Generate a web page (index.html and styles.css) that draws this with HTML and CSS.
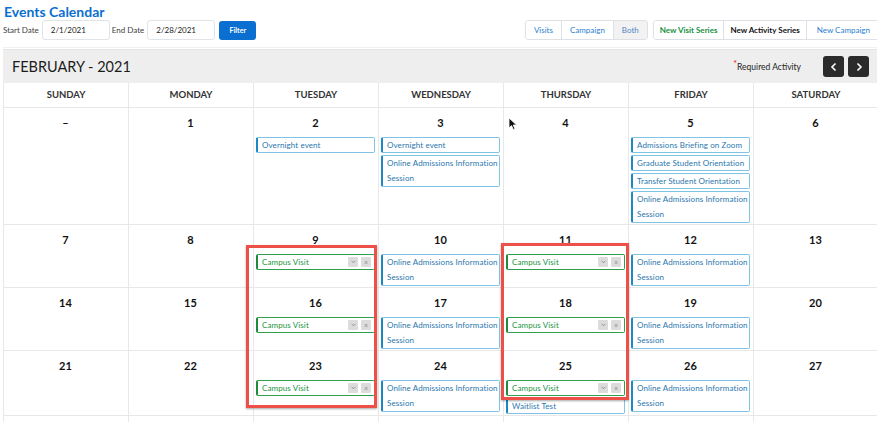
FILE: index.html
```html
<!DOCTYPE html>
<html lang="en">
<head>
  <meta charset="UTF-8">
  <meta name="viewport" content="width=device-width, initial-scale=1.0">
  <title>Events Calendar</title>
  <link rel="stylesheet" href="styles.css">
</head>
<body>
  <h1 class="page-title">Events Calendar</h1>

  <!-- Filter + actions toolbar -->
  <div class="toolbar">
    <form class="filters">
      <label>Start Date</label>
      <input type="text" class="date-input" value="2/1/2021">
      <label>End Date</label>
      <input type="text" class="date-input" value="2/28/2021">
      <button type="button" class="btn-filter">Filter</button>
    </form>
    <div class="actions">
      <div class="btn-group">
        <button type="button" class="btn">Visits</button>
        <button type="button" class="btn">Campaign</button>
        <button type="button" class="btn active">Both</button>
      </div>
      <div class="btn-group series">
        <button type="button" class="btn green">New Visit Series</button>
        <button type="button" class="btn dark">New Activity Series</button>
        <button type="button" class="btn wide">New Campaign</button>
      </div>
    </div>
  </div>
  <div class="divider"></div>

  <!-- Calendar -->
  <div class="calendar">
    <div class="cal-header">
      <span class="month">FEBRUARY - 2021</span>
      <div class="cal-nav">
        <span class="legend"><span class="req">*</span>Required Activity</span>
        <button type="button" class="nav-btn">
          <svg width="8" height="10" viewBox="0 0 8 10"><path d="M5.5 1.5 L2 5 L5.5 8.5" fill="none" stroke="#fff" stroke-width="1.6"/></svg>
        </button>
        <button type="button" class="nav-btn">
          <svg width="8" height="10" viewBox="0 0 8 10"><path d="M2.5 1.5 L6 5 L2.5 8.5" fill="none" stroke="#fff" stroke-width="1.6"/></svg>
        </button>
      </div>
    </div>

    <div class="grid">
      <div class="dow">Sunday</div>
      <div class="dow">Monday</div>
      <div class="dow">Tuesday</div>
      <div class="dow">Wednesday</div>
      <div class="dow">Thursday</div>
      <div class="dow">Friday</div>
      <div class="dow">Saturday</div>

      <!-- week 1 -->
      <div class="cell"><div class="num">–</div></div>
      <div class="cell"><div class="num">1</div></div>
      <div class="cell">
        <div class="num">2</div>
        <div class="event">Overnight event</div>
      </div>
      <div class="cell">
        <div class="num">3</div>
        <div class="event">Overnight event</div>
        <div class="event multi">Online Admissions Information Session</div>
      </div>
      <div class="cell"><div class="num">4</div></div>
      <div class="cell">
        <div class="num">5</div>
        <div class="event">Admissions Briefing on Zoom</div>
        <div class="event">Graduate Student Orientation</div>
        <div class="event">Transfer Student Orientation</div>
        <div class="event multi">Online Admissions Information Session</div>
      </div>
      <div class="cell"><div class="num">6</div></div>

      <!-- week 2 -->
      <div class="cell"><div class="num">7</div></div>
      <div class="cell"><div class="num">8</div></div>
      <div class="cell">
        <div class="num">9</div>
        <div class="event visit"><span class="label">Campus Visit</span><span class="mini"><svg width="5" height="4" viewBox="0 0 5 4"><path d="M0.6 0.8 L2.5 2.8 L4.4 0.8" fill="none" stroke="#8a8a8a" stroke-width="0.9"/></svg></span><span class="mini">&times;</span></div>
      </div>
      <div class="cell">
        <div class="num">10</div>
        <div class="event multi">Online Admissions Information Session</div>
      </div>
      <div class="cell">
        <div class="num">11</div>
        <div class="event visit"><span class="label">Campus Visit</span><span class="mini"><svg width="5" height="4" viewBox="0 0 5 4"><path d="M0.6 0.8 L2.5 2.8 L4.4 0.8" fill="none" stroke="#8a8a8a" stroke-width="0.9"/></svg></span><span class="mini">&times;</span></div>
      </div>
      <div class="cell">
        <div class="num">12</div>
        <div class="event multi">Online Admissions Information Session</div>
      </div>
      <div class="cell"><div class="num">13</div></div>

      <!-- week 3 -->
      <div class="cell"><div class="num">14</div></div>
      <div class="cell"><div class="num">15</div></div>
      <div class="cell">
        <div class="num">16</div>
        <div class="event visit"><span class="label">Campus Visit</span><span class="mini"><svg width="5" height="4" viewBox="0 0 5 4"><path d="M0.6 0.8 L2.5 2.8 L4.4 0.8" fill="none" stroke="#8a8a8a" stroke-width="0.9"/></svg></span><span class="mini">&times;</span></div>
      </div>
      <div class="cell">
        <div class="num">17</div>
        <div class="event multi">Online Admissions Information Session</div>
      </div>
      <div class="cell">
        <div class="num">18</div>
        <div class="event visit"><span class="label">Campus Visit</span><span class="mini"><svg width="5" height="4" viewBox="0 0 5 4"><path d="M0.6 0.8 L2.5 2.8 L4.4 0.8" fill="none" stroke="#8a8a8a" stroke-width="0.9"/></svg></span><span class="mini">&times;</span></div>
      </div>
      <div class="cell">
        <div class="num">19</div>
        <div class="event multi">Online Admissions Information Session</div>
      </div>
      <div class="cell"><div class="num">20</div></div>

      <!-- week 4 -->
      <div class="cell"><div class="num">21</div></div>
      <div class="cell"><div class="num">22</div></div>
      <div class="cell">
        <div class="num">23</div>
        <div class="event visit"><span class="label">Campus Visit</span><span class="mini"><svg width="5" height="4" viewBox="0 0 5 4"><path d="M0.6 0.8 L2.5 2.8 L4.4 0.8" fill="none" stroke="#8a8a8a" stroke-width="0.9"/></svg></span><span class="mini">&times;</span></div>
      </div>
      <div class="cell">
        <div class="num">24</div>
        <div class="event multi">Online Admissions Information Session</div>
      </div>
      <div class="cell">
        <div class="num">25</div>
        <div class="event visit"><span class="label">Campus Visit</span><span class="mini"><svg width="5" height="4" viewBox="0 0 5 4"><path d="M0.6 0.8 L2.5 2.8 L4.4 0.8" fill="none" stroke="#8a8a8a" stroke-width="0.9"/></svg></span><span class="mini">&times;</span></div>
        <div class="event">Waitlist Test</div>
      </div>
      <div class="cell">
        <div class="num">26</div>
        <div class="event multi">Online Admissions Information Session</div>
      </div>
      <div class="cell"><div class="num">27</div></div>

      <!-- week 5 -->
      <div class="cell"></div>
      <div class="cell"></div>
      <div class="cell"></div>
      <div class="cell"></div>
      <div class="cell"></div>
      <div class="cell"></div>
      <div class="cell"></div>
    </div>

    <!-- highlight annotations -->
    <div class="highlight tue"></div>
    <div class="highlight thu"></div>
    <svg class="cursor" width="10" height="14" viewBox="0 0 10 14"><path d="M1 1 L1 11 L3.5 8.6 L5.4 12.6 L7 11.9 L5.2 8 L8.6 8 Z" fill="#111" stroke="#fff" stroke-width="0.8"/></svg>
  </div>
</body>
</html>
```

FILE: styles.css
```css
body {
    margin: 0;
    font-family: "Lato", "Open Sans", Arial, sans-serif;
    color: #16325c;
    background: #fff;
    width: 877px;
    height: 422px;
    overflow: hidden;
}
.page-title {
    margin: 0;
    padding: 3px 0 0 4px;
    font-size: 14px;
    line-height: 17px;
    font-weight: 700;
    color: #0a6fd0;
}
.toolbar {
    display: flex;
    align-items: center;
    padding: 0 0 0 3px;
    height: 20px;
}
.filters {
    display: flex;
    align-items: center;
    margin: 0;
}
.filters label {
    font-size: 8px;
    color: #3e3e3c;
    margin-right: 3px;
}
.date-input {
    width: 58px;
    height: 16px;
    padding: 1px 0 1px 8px;
    margin-right: 2px;
    border: 1px solid #e0e3e8;
    border-radius: 3px;
    font-family: inherit;
    font-size: 8px;
    color: #222;
}
.btn-filter {
    margin-left: 2px;
    width: 37px;
    height: 19px;
    border: none;
    border-radius: 3px;
    background: #0a6fd0;
    color: #fff;
    font-family: inherit;
    font-size: 7px;
    font-weight: 700;
}
.actions {
    display: flex;
    gap: 5px;
    margin-left: auto;
    margin-right: -4px;
    flex-shrink: 0;
}
.btn-group {
    display: flex;
    border: 1px solid #dde0e5;
    border-radius: 3px;
    overflow: hidden;
}
.btn {
    height: 18px;
    padding: 0 8px;
    border: none;
    border-left: 1px solid #dde0e5;
    background: #fff;
    color: #2b7fd0;
    font-family: inherit;
    font-size: 8px;
    white-space: nowrap;
}
.btn:first-child {
    border-left: none;
}
.btn.active {
    background: #f2f2f2;
    color: #4e86c2;
}
.series .btn {
    padding: 0 6px;
}
.btn.green {
    color: #17913f;
    font-weight: 700;
}
.btn.dark {
    color: #111;
    font-weight: 700;
}
.series .btn.wide {
    padding: 0 10px;
}
.divider {
    margin: 7px 0 0 3px;
    height: 1px;
    border-top: 1px solid #f2f2f2;
    border-bottom: 1px solid #e4e4e4;
}

/* calendar */
.calendar {
    position: relative;
    margin: 0 0 0 3px;
    width: 875px;
}
.cal-header {
    display: flex;
    justify-content: space-between;
    align-items: center;
    height: 33px;
    padding: 0 9px;
    background: #eeeeee;
}
.month {
    font-size: 14.5px;
    color: #1c1c1c;
}
.cal-nav {
    display: flex;
    align-items: center;
    gap: 4px;
}
.legend {
    font-size: 8.5px;
    color: #222;
    margin-right: 18px;
}
.req {
    color: #e8120c;
    font-size: 9px;
    position: relative;
    top: -3px;
}
.nav-btn {
    display: flex;
    align-items: center;
    justify-content: center;
    width: 21px;
    height: 21px;
    padding: 0;
    border: none;
    border-radius: 3px;
    background: #2b2b2b;
}
.grid {
    display: grid;
    grid-template-columns: repeat(7, 125px);
    border-left: 1px solid #e8e8e8;
}
.dow {
    height: 24px;
    line-height: 24px;
    text-align: center;
    text-transform: uppercase;
    font-size: 9.5px;
    font-weight: 700;
    color: #333;
    border-right: 1px solid #e8e8e8;
    border-bottom: 1px solid #e8e8e8;
}
.cell {
    min-height: 55px;
    padding: 6px 3px 1px 2px;
    border-right: 1px solid #e8e8e8;
    border-bottom: 1px solid #e8e8e8;
}
.num {
    height: 18px;
    line-height: 18px;
    margin-bottom: 5px;
    text-align: center;
    font-size: 11px;
    font-weight: 700;
    color: #111;
}
.event {
    display: flex;
    align-items: center;
    margin-bottom: 2px;
    padding: 0 0 0 4px;
    height: 14px;
    line-height: 14px;
    border: 1px solid #7fc4e6;
    border-left: 2px solid #1c88c4;
    border-radius: 2px;
    font-size: 8px;
    letter-spacing: 0.1px;
    color: #2a77ae;
    white-space: nowrap;
}
.event:last-child {
    margin-bottom: 0;
}
.event.multi {
    display: block;
    height: auto;
    line-height: 15px;
    white-space: normal;
}
.event.visit {
    border-color: #2f9e4e;
    border-left-color: #1f8a3e;
    color: #1a9440;
    padding-right: 3px;
}
.event.visit .label {
    margin-right: auto;
}
.mini {
    display: flex;
    align-items: center;
    justify-content: center;
    width: 10px;
    height: 10px;
    margin-left: 3px;
    background: #dcdcdc;
    border-radius: 1px;
    color: #8a8a8a;
    font-size: 7px;
    line-height: 10px;
    letter-spacing: 0;
}
.highlight {
    position: absolute;
    border: 3px solid #ec5048;
    box-shadow: 0 1px 2px rgba(0, 0, 0, 0.35);
    pointer-events: none;
}
.highlight.tue {
    left: 243px;
    top: 195px;
    width: 125px;
    height: 157px;
}
.highlight.thu {
    left: 498px;
    top: 193px;
    width: 122px;
    height: 151px;
}
.cursor {
    position: absolute;
    left: 505px;
    top: 67px;
}
```
